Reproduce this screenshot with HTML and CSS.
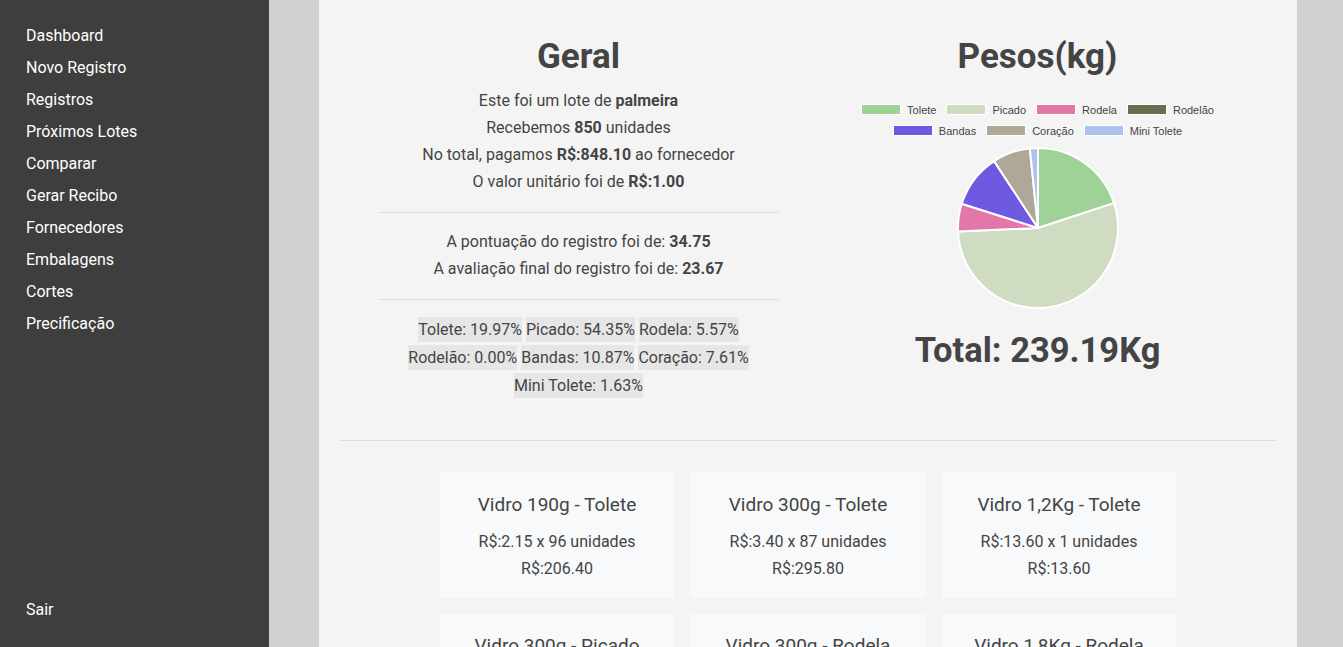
FILE: index.html
```html
<!DOCTYPE html>
<html lang="pt-BR">
<head>
<meta charset="utf-8">
<title>Registro</title>
<link rel="stylesheet" href="styles.css">
</head>
<body>
<div class="layout">
  <nav class="sidebar">
    <ul class="menu">
      <li><a href="#">Dashboard</a></li>
      <li><a href="#">Novo Registro</a></li>
      <li><a href="#">Registros</a></li>
      <li><a href="#">Próximos Lotes</a></li>
      <li><a href="#">Comparar</a></li>
      <li><a href="#">Gerar Recibo</a></li>
      <li><a href="#">Fornecedores</a></li>
      <li><a href="#">Embalagens</a></li>
      <li><a href="#">Cortes</a></li>
      <li><a href="#">Precificação</a></li>
    </ul>
    <a class="logout" href="#">Sair</a>
  </nav>
  <main class="main">
    <div class="panel">
      <div class="top-row">
        <section class="col">
          <h1 class="title">Geral</h1>
          <div class="info first">
            <p>Este foi um lote de <b>palmeira</b></p>
            <p>Recebemos <b>850</b> unidades</p>
            <p>No total, pagamos <b>R$:848.10</b> ao fornecedor</p>
            <p>O valor unitário foi de <b>R$:1.00</b></p>
          </div>
          <hr class="sep">
          <div class="info">
            <p>A pontuação do registro foi de: <b>34.75</b></p>
            <p>A avaliação final do registro foi de: <b>23.67</b></p>
          </div>
          <hr class="sep">
          <div class="chips">
            <span class="chip">Tolete: 19.97%</span> <span class="chip">Picado: 54.35%</span> <span class="chip">Rodela: 5.57%</span><br>
            <span class="chip">Rodelão: 0.00%</span> <span class="chip">Bandas: 10.87%</span> <span class="chip">Coração: 7.61%</span><br>
            <span class="chip">Mini Tolete: 1.63%</span>
          </div>
        </section>
        <section class="col">
          <h1 class="title">Pesos(kg)</h1>
          <div class="legend">
            <span class="leg"><i class="box c-tolete"></i>Tolete</span>
            <span class="leg"><i class="box c-picado"></i>Picado</span>
            <span class="leg"><i class="box c-rodela"></i>Rodela</span>
            <span class="leg"><i class="box c-rodelao"></i>Rodelão</span>
            <span class="leg"><i class="box c-bandas"></i>Bandas</span>
            <span class="leg"><i class="box c-coracao"></i>Coração</span>
            <span class="leg"><i class="box c-mini"></i>Mini Tolete</span>
          </div>
          <svg class="pie" width="164" height="164" viewBox="0 0 164 164">
            <g stroke="#fff" stroke-width="2" stroke-linejoin="round">
              <path fill="#9fd296" d="M82,82 L82,2 A80,80 0 0,1 158.03,57.14 Z"/>
              <path fill="#cfdcc1" d="M82,82 L158.03,57.14 A80,80 0 1,1 2.07,85.42 Z"/>
              <path fill="#e377a9" d="M82,82 L2.07,85.42 A80,80 0 0,1 5.74,57.81 Z"/>
              <path fill="#6e5ae0" d="M82,82 L5.74,57.81 A80,80 0 0,1 38.11,15.11 Z"/>
              <path fill="#afa898" d="M82,82 L38.11,15.11 A80,80 0 0,1 73.82,2.42 Z"/>
              <path fill="#adc3ee" d="M82,82 L73.82,2.42 A80,80 0 0,1 82,2 Z"/>
            </g>
          </svg>
          <div class="total">Total: 239.19Kg</div>
        </section>
      </div>
      <hr class="divider">
      <div class="cards">
        <div class="card">
          <h3 class="card-title">Vidro 190g - Tolete</h3>
          <p>R$:2.15 x 96 unidades</p>
          <p>R$:206.40</p>
        </div>
        <div class="card">
          <h3 class="card-title">Vidro 300g - Tolete</h3>
          <p>R$:3.40 x 87 unidades</p>
          <p>R$:295.80</p>
        </div>
        <div class="card">
          <h3 class="card-title">Vidro 1,2Kg - Tolete</h3>
          <p>R$:13.60 x 1 unidades</p>
          <p>R$:13.60</p>
        </div>
        <div class="card">
          <h3 class="card-title">Vidro 300g - Picado</h3>
          <p>R$:2.90 x 120 unidades</p>
          <p>R$:348.00</p>
        </div>
        <div class="card">
          <h3 class="card-title">Vidro 300g - Rodela</h3>
          <p>R$:3.10 x 40 unidades</p>
          <p>R$:124.00</p>
        </div>
        <div class="card">
          <h3 class="card-title">Vidro 1,8Kg - Rodela</h3>
          <p>R$:18.90 x 2 unidades</p>
          <p>R$:37.80</p>
        </div>
      </div>
    </div>
  </main>
</div>
</body>
</html>
```

FILE: styles.css
```css
* { box-sizing: border-box; }
html, body { margin: 0; padding: 0; height: 100%; overflow: hidden; }
body {
  font-family: Roboto, "Liberation Sans", Arial, sans-serif;
  font-size: 16px;
  color: #444;
  background: #d0d0d0;
}
.layout { display: flex; height: 647px; }
.sidebar {
  width: 269px;
  flex: none;
  background: #3e3e3e;
  display: flex;
  flex-direction: column;
  justify-content: space-between;
  padding: 20px 26px 21px;
}
.menu { list-style: none; margin: 0; padding: 0; }
.menu li { line-height: 32px; }
.sidebar a { color: #fff; text-decoration: none; line-height: 32px; display: block; }
.main { flex: 1; padding-left: 50px; overflow: hidden; }
.panel {
  width: 978px;
  min-height: 100%;
  background: #f4f4f4;
  padding: 0 20px;
}
.top-row { display: flex; padding: 38px 10px 0; }
.col { flex: 1; display: flex; flex-direction: column; align-items: center; text-align: center; }
.title { margin: 0; font-size: 35px; font-weight: 700; line-height: 38px; color: #444; }
.info { margin-top: 0; }
.info.first { margin-top: 11px; }
.info p { margin: 0; line-height: 27px; }
.info b { font-weight: 700; }
.sep { width: 400px; border: 0; border-top: 1px solid #dcdcdc; margin: 17px 0 15px; }
.chips { line-height: 28px; margin-top: 1px; }
.chip { background: #e6e6e6; padding: 3px 0; }
.legend {
  display: flex; flex-wrap: wrap; justify-content: center;
  column-gap: 10px; width: 400px; margin-top: 23px;
  font-family: "Liberation Sans", Arial, sans-serif; font-size: 11px; color: #444;
}
.leg { display: flex; align-items: center; height: 21px; }
.box { display: inline-block; width: 40px; height: 11px; border: 1px solid #fff; margin-right: 6px; }
.c-tolete { background: #9fd296; }
.c-picado { background: #cfdcc1; }
.c-rodela { background: #e377a9; }
.c-rodelao { background: #66704f; }
.c-bandas { background: #6e5ae0; }
.c-coracao { background: #afa898; }
.c-mini { background: #adc3ee; }
.pie { margin-top: 5px; display: block; }
.total { font-size: 34.5px; font-weight: 700; line-height: 41px; margin-top: 20px; color: #444; }
.divider { border: 0; border-top: 1px solid #dcdcdc; margin: 40px 0 32px; }
.cards {
  display: grid;
  grid-template-columns: repeat(3, 234px);
  column-gap: 17px; row-gap: 16px;
  justify-content: center;
}
.card { background: #f8f9fa; padding: 20px 10px 16px; text-align: center; }
.card-title { margin: 0 0 11px; font-size: 19px; font-weight: 400; line-height: 24px; color: #444; }
.card p { margin: 0; line-height: 27px; }
```
